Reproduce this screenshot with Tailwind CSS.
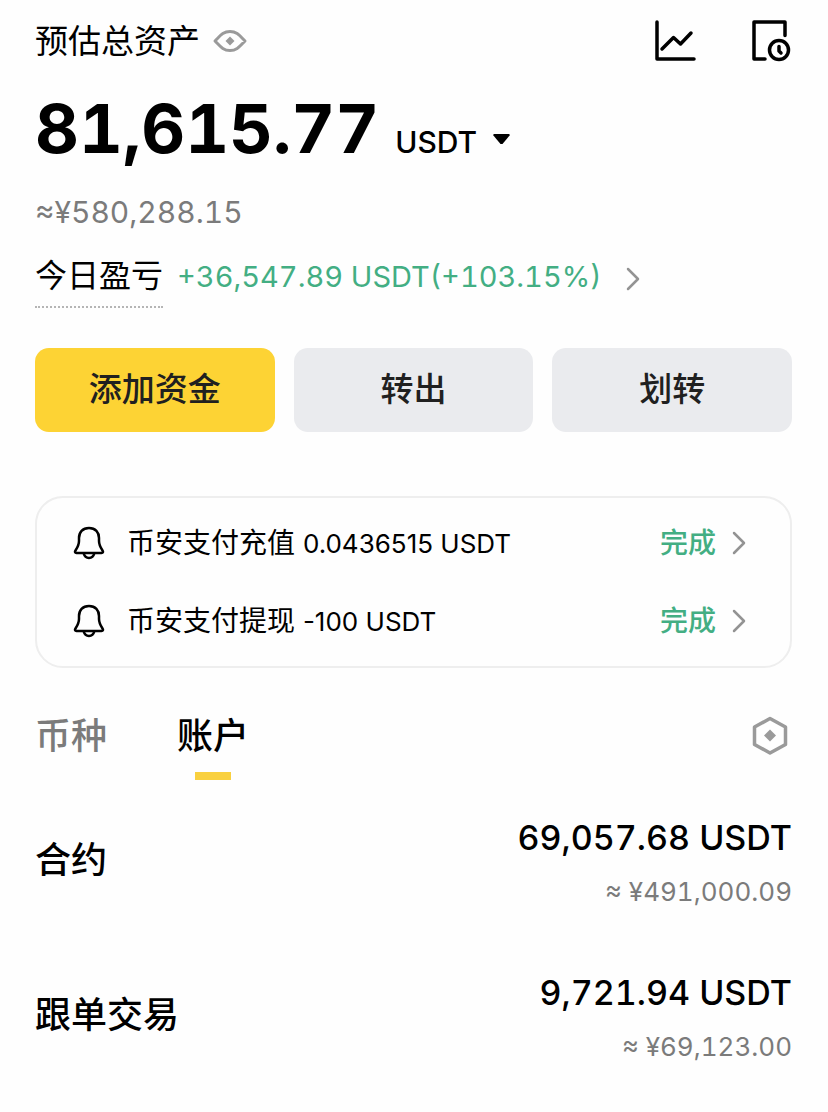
<!DOCTYPE html>
<html lang="zh-CN">
<head>
    <meta charset="UTF-8">
    <meta name="viewport" content="width=device-width, initial-scale=1.0">
    <title>资产总览</title>
    <script src="https://cdn.jsdelivr.net/npm/@tailwindcss/browser@4"></script>
</head>
<body class="bg-[#fefefe] text-black font-['Inter','Noto_Sans_CJK_SC',sans-serif] tabular-nums">
    <main class="pl-[35px] pr-9 pb-8">
        <header class="flex items-center justify-between pt-4 h-[66px]">
            <div class="flex items-center gap-3">
                <h1 class="text-[33px] leading-[48px]">预估总资产</h1>
                <button type="button" aria-label="隐藏资产">
                    <svg class="w-9 h-6" viewBox="0 0 36 24" fill="none">
                        <path d="M3 12C8 7 11 2.500 18 2.500S28 7 33 12C28 17 25 21.500 18 21.500S8 17 3 12Z" stroke="#9a9a9a" stroke-width="3" stroke-linejoin="round"/>
                        <path d="M18 7.500L22.500 12L18 16.500L13.500 12Z" fill="#9a9a9a"/>
                    </svg>
                </button>
            </div>
            <nav class="flex items-center gap-[54px]">
                <a href="#analysis" aria-label="资产分析">
                    <svg class="w-[42px] h-[42px]" viewBox="0 0 42 42" fill="none" stroke="#000" stroke-width="3.500" stroke-linecap="round" stroke-linejoin="round">
                        <path d="M3 2V39H40"/>
                        <path d="M8 29L19.500 17.500L26.500 24L37 13"/>
                    </svg>
                </a>
                <a href="#history" aria-label="历史记录">
                    <svg class="w-[42px] h-[42px]" viewBox="0 0 42 42" fill="none" stroke="#000" stroke-width="3.500" stroke-linecap="round" stroke-linejoin="round">
                        <path d="M35 15.500V2H4V39H15"/>
                        <circle cx="29" cy="30" r="9.500"/>
                        <path d="M29 26.500V31L31 33"/>
                    </svg>
                </a>
            </nav>
        </header>

        <section>
            <div class="flex items-baseline gap-4 pt-5">
                <p class="text-[68px] leading-[84px] font-bold">81,615.77</p>
                <label class="flex items-center gap-4">
                    <select aria-label="计价货币" class="appearance-none bg-transparent text-[30px] leading-9 font-medium [field-sizing:content]">
                        <option>USDT</option>
                    </select>
                    <svg class="mb-1.5 w-[17px] h-[11px]" viewBox="0 0 17 11"><path d="M1 0H16L17 1L9.500 10H7.500L0 1Z" fill="#000"/></svg>
                </label>
            </div>
            <p class="pt-6 text-[30px] leading-9 text-[#7b7b7b]">≈¥580,288.15</p>
            <a href="#pnl" class="flex items-center pt-4">
                <span class="text-[32px] leading-[60px] border-b-2 border-dotted border-[#b5b5b5]">今日盈亏</span>
                <span class="ml-3.5 text-[29px] leading-[60px] text-[#43ae83]">+36,547.89 USDT(+103.15%)</span>
                <svg class="ml-6 mt-1 w-3.5 h-6" viewBox="0 0 14 24" fill="none" stroke="#939393" stroke-width="2.500" stroke-linecap="round" stroke-linejoin="round"><path d="M2 2L12 12L2 22"/></svg>
            </a>
        </section>

        <div class="grid grid-cols-3 gap-[19px] mt-10 text-[33px] font-medium text-[#202020]">
            <button type="button" class="h-[84px] rounded-[14px] bg-[#fdd334]">添加资金</button>
            <button type="button" class="h-[84px] rounded-[14px] bg-[#eaebee]">转出</button>
            <button type="button" class="h-[84px] rounded-[14px] bg-[#eaebee]">划转</button>
        </div>

        <section class="mt-16 px-9 py-1.5 rounded-[28px] border-2 border-[#eeeeee]">
            <a href="#deposit" class="flex items-center h-[78px]">
                <svg class="w-8 h-[34px]" viewBox="0 0 32 34" fill="none" stroke="#000" stroke-width="2.500" stroke-linejoin="round">
                    <path d="M16 2C9.500 2 6 6.500 6 12V15C6 19 4.500 21.500 2.500 24.500C1.500 26 2 27 3.500 27H28.500C30 27 30.500 26 29.500 24.500C27.500 21.500 26 19 26 15V12C26 6.500 22.500 2 16 2Z"/>
                    <path d="M10.500 27C11.500 30.500 13.500 32 16 32S20.500 30.500 21.500 27"/>
                </svg>
                <span class="ml-[22px] text-[28px] proportional-nums">币安支付充值 <span class="text-[26px]">0.0436515 USDT</span></span>
                <span class="ml-auto text-[28px] font-medium text-[#43ae83]">完成</span>
                <svg class="ml-4 mr-2 w-3.5 h-6" viewBox="0 0 14 24" fill="none" stroke="#939393" stroke-width="2.500" stroke-linecap="round" stroke-linejoin="round"><path d="M2 2L12 12L2 22"/></svg>
            </a>
            <a href="#withdraw" class="flex items-center h-[78px]">
                <svg class="w-8 h-[34px]" viewBox="0 0 32 34" fill="none" stroke="#000" stroke-width="2.500" stroke-linejoin="round">
                    <path d="M16 2C9.500 2 6 6.500 6 12V15C6 19 4.500 21.500 2.500 24.500C1.500 26 2 27 3.500 27H28.500C30 27 30.500 26 29.500 24.500C27.500 21.500 26 19 26 15V12C26 6.500 22.500 2 16 2Z"/>
                    <path d="M10.500 27C11.500 30.500 13.500 32 16 32S20.500 30.500 21.500 27"/>
                </svg>
                <span class="ml-[22px] text-[28px] proportional-nums">币安支付提现 <span class="text-[26px]">-100 USDT</span></span>
                <span class="ml-auto text-[28px] font-medium text-[#43ae83]">完成</span>
                <svg class="ml-4 mr-2 w-3.5 h-6" viewBox="0 0 14 24" fill="none" stroke="#939393" stroke-width="2.500" stroke-linecap="round" stroke-linejoin="round"><path d="M2 2L12 12L2 22"/></svg>
            </a>
        </section>

        <div class="flex items-start justify-between mt-10">
            <div role="tablist" class="flex gap-[70px] text-[36px] leading-[56px] font-medium">
                <button type="button" role="tab" aria-selected="false" class="flex flex-col text-[#7b7b7b]">币种</button>
                <button type="button" role="tab" aria-selected="true" class="flex flex-col items-center gap-2">
                    账户
                    <span class="w-9 h-2 bg-[#f9d03f]"></span>
                </button>
            </div>
            <button type="button" aria-label="设置" class="mt-2 mr-1">
                <svg class="w-9 h-10" viewBox="0 0 36 40" fill="none">
                    <path d="M18 2.500L33.500 11V28.500L18 37L2.500 28.500V11Z" stroke="#9a9a9a" stroke-width="3.500" stroke-linejoin="round"/>
                    <path d="M18 13.500L24 19.500L18 25.500L12 19.500Z" fill="#9a9a9a"/>
                </svg>
            </button>
        </div>

        <ul class="pt-8">
            <li>
                <a href="#futures" class="flex items-center justify-between h-[155px] pb-[55px]">
                    <span class="pb-1 text-[36px] font-medium">合约</span>
                    <span class="flex flex-col items-end gap-2">
                        <span class="text-[34px] leading-[52px] font-medium">69,057.68 USDT</span>
                        <span class="text-[26px] leading-10 text-[#7b7b7b]">≈ ¥491,000.09</span>
                    </span>
                </a>
            </li>
            <li>
                <a href="#copy" class="flex items-center justify-between h-[100px]">
                    <span class="pb-1 text-[36px] font-medium">跟单交易</span>
                    <span class="flex flex-col items-end gap-2">
                        <span class="text-[34px] leading-[52px] font-medium">9,721.94 USDT</span>
                        <span class="text-[26px] leading-10 text-[#7b7b7b]">≈ ¥69,123.00</span>
                    </span>
                </a>
            </li>
        </ul>
    </main>
</body>
</html>
